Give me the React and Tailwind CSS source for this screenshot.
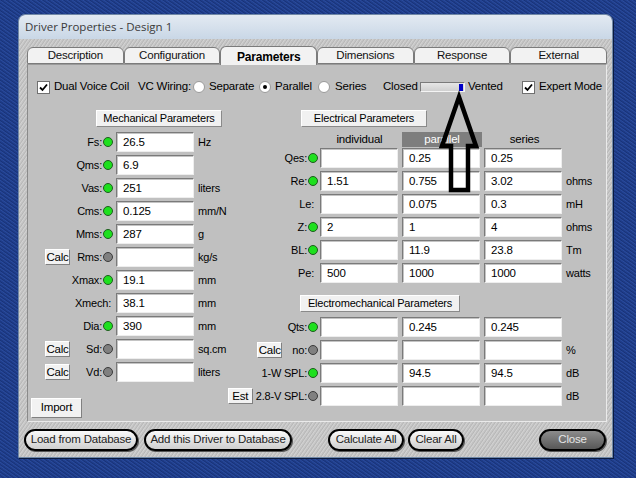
import React from "react"

const font = "font-['Liberation_Sans',Arial,sans-serif]"

const mech = [
  { l: "Fs:", led: "on", v: "26.5", u: "Hz" },
  { l: "Qms:", led: "on", v: "6.9", u: "" },
  { l: "Vas:", led: "on", v: "251", u: "liters" },
  { l: "Cms:", led: "on", v: "0.125", u: "mm/N" },
  { l: "Mms:", led: "on", v: "287", u: "g" },
  { l: "Rms:", led: "off", v: "", u: "kg/s", calc: true },
  { l: "Xmax:", led: "on", v: "19.1", u: "mm" },
  { l: "Xmech:", led: null, v: "38.1", u: "mm" },
  { l: "Dia:", led: "on", v: "390", u: "mm" },
  { l: "Sd:", led: "off", v: "", u: "sq.cm", calc: true },
  { l: "Vd:", led: "off", v: "", u: "liters", calc: true },
]

const elec = [
  { l: "Qes:", led: "on", v: ["", "0.25", "0.25"], u: "" },
  { l: "Re:", led: "on", v: ["1.51", "0.755", "3.02"], u: "ohms" },
  { l: "Le:", led: null, v: ["", "0.075", "0.3"], u: "mH" },
  { l: "Z:", led: "on", v: ["2", "1", "4"], u: "ohms" },
  { l: "BL:", led: "on", v: ["", "11.9", "23.8"], u: "Tm" },
  { l: "Pe:", led: null, v: ["500", "1000", "1000"], u: "watts" },
]

const emech = [
  { l: "Qts:", led: "on", v: ["", "0.245", "0.245"], u: "" },
  { l: "no:", led: "off", v: ["", "", ""], u: "%", btn: "Calc" },
  { l: "1-W SPL:", led: "on", v: ["", "94.5", "94.5"], u: "dB" },
  { l: "2.8-V SPL:", led: "off", v: ["", "", ""], u: "dB", btn: "Est" },
]

const tabs = ["Description", "Configuration", "Parameters", "Dimensions", "Response", "External"]

const Led = ({ state }) => (
  <span
    className={`inline-block w-[10px] h-[10px] rounded-full border ${
      state === "on" ? "bg-[#1ee01e] border-[#1f5a1f]" : "bg-[#808080] border-[#3a3a3a]"
    }`}
  />
)

const Field = ({ v }) => (
  <div className="w-[78px] h-[20px] shrink-0 bg-white border border-[#7a7a7a] border-b-[#eeeeee] border-r-[#eeeeee] shadow-[inset_1px_1px_0_#c4c4c4] pl-[6px] text-[11.5px] leading-[18px] text-black">
    {v}
  </div>
)

const SmallBtn = ({ children, className = "" }) => (
  <div
    className={`h-[16px] shrink-0 bg-[#f2f2f2] border border-white border-b-[#808080] border-r-[#808080] text-[11.5px] leading-[14px] text-center text-black whitespace-nowrap ${className}`}
  >
    {children}
  </div>
)

const Header = ({ children, className = "" }) => (
  <div
    className={`h-[17px] bg-[#f1f1f1] border border-white border-b-[#8a8a8a] border-r-[#8a8a8a] text-[11px] leading-[15px] text-center text-black whitespace-nowrap ${className}`}
  >
    {children}
  </div>
)

const Check = () => (
  <span className="w-[13px] h-[13px] shrink-0 bg-white border border-[#707070] flex items-center justify-center">
    <svg width="9" height="9" viewBox="0 0 9 9">
      <path d="M1 4.5 L3.5 7 L8 1.5" fill="none" stroke="black" strokeWidth="1.8" />
    </svg>
  </span>
)

const Radio = ({ on }) => (
  <span className="w-[12px] h-[12px] shrink-0 rounded-full bg-white border border-[#9a9a9a] flex items-center justify-center">
    {on && <span className="w-[4px] h-[4px] rounded-full bg-black" />}
  </span>
)

const PillBtn = ({ children, className = "", dark }) => (
  <div
    className={`h-[22px] shrink-0 rounded-full border-2 border-black flex items-center justify-center text-[11.5px] whitespace-nowrap shadow-[1px_1px_0_#555] ${
      dark
        ? "bg-gradient-to-b from-[#8c8c8c] to-[#585858] text-[#e6e6e6]"
        : "bg-gradient-to-b from-[#fafafa] to-[#cfcfcf] text-[#222]"
    } ${className}`}
  >
    {children}
  </div>
)

const MechRow = ({ r }) => (
  <div className="flex items-center h-[20px] pl-[17px]">
    <div className="w-[25px] shrink-0">{r.calc && <SmallBtn className="w-[25px]">Calc</SmallBtn>}</div>
    <div className="w-[46px] shrink-0 flex justify-end items-center whitespace-nowrap">
      <span className={r.led ? "" : "mr-[5px]"}>{r.l}</span>
      {r.led && (
        <span className="ml-[1px] mr-[3px] flex">
          <Led state={r.led} />
        </span>
      )}
    </div>
    <Field v={r.v} />
    <span className="pl-[4px] whitespace-nowrap">{r.u}</span>
  </div>
)

const ElecRow = ({ r }) => (
  <div className="flex items-center h-[20px]">
    <div className="w-[93px] shrink-0 flex justify-end items-center whitespace-nowrap">
      {r.btn === "Calc" && <SmallBtn className="mr-[10px] w-[25px]">Calc</SmallBtn>}
      {r.btn === "Est" && <SmallBtn className="mr-[3px] w-[25px]">Est</SmallBtn>}
      <span className={r.led ? "" : "mr-[6px]"}>{r.l}</span>
      {r.led && (
        <span className="ml-[1px] mr-[2px] flex">
          <Led state={r.led} />
        </span>
      )}
    </div>
    <div className="flex gap-[4px]">
      {r.v.map((v, i) => (
        <Field key={i} v={v} />
      ))}
    </div>
    <span className="pl-[4px] whitespace-nowrap">{r.u}</span>
  </div>
)

export default function App() {
  return (
    <div className={`relative w-[636px] h-[478px] overflow-hidden bg-[#1f3d8c] bg-[repeating-linear-gradient(35deg,#1d3a87_0px,#2a4c9e_1px,#183277_2px,#21408f_3px)] ${font} text-[11px] tracking-[-0.2px] text-black`}>
      <div className="ml-[18px] mt-[14px] w-[595px] h-[444px] flex flex-col rounded-t-[7px] overflow-hidden border border-[#7088a6] shadow-[1px_1px_0_#0a1a40]">
        {/* title bar */}
        <div className="h-[24px] shrink-0 bg-gradient-to-b from-[#e3eaf2] to-[#c9d7e6] flex items-center pl-[6px] font-['Open_Sans',sans-serif] text-[11.5px] tracking-normal text-[#3a3a3a]">
          Driver Properties - Design 1
        </div>

        {/* textured frame */}
        <div className="flex-1 bg-[#c5c5c5] bg-[repeating-linear-gradient(125deg,#c9c9c9_0px,#b6b6b6_1px,#d4d4d4_2px,#c2c2c2_3px)] pt-[8px] pl-[8px] pr-[5px] flex flex-col">
          <div className="flex w-[580px] h-[17px] items-end">
            {tabs.map((t) => {
              const active = t === "Parameters"
              return (
                <div
                  key={t}
                  className={`flex-1 rounded-t-[6px] border border-[#7b7b7b] bg-[#f2f2f2] flex items-center justify-center ${
                    active
                      ? "h-[19px] border-b-0 font-bold text-[12px] pt-[2px] -mb-[1px] z-10"
                      : "h-[17px] text-[11.5px] text-[#111]"
                  }`}
                >
                  {t}
                </div>
              )
            })}
          </div>

          {/* panel */}
          <div className="w-[580px] h-[358px] bg-[#c0c0c0] border border-[#8a8a8a] border-t-[#9a9a9a] border-r-[#eaeaea] border-b-[#eaeaea] pt-[13px]">
            {/* top row */}
            <div className="flex items-center h-[18px] pl-[9px] text-[11.5px] whitespace-nowrap">
              <Check />
              <span className="ml-[4px] w-[84px]">Dual Voice Coil</span>
              <span className="w-[55px]">VC Wiring:</span>
              <Radio />
              <span className="ml-[4px] w-[50px]">Separate</span>
              <Radio on />
              <span className="ml-[4px] w-[43px]">Parallel</span>
              <Radio />
              <span className="ml-[5px] w-[48px]">Series</span>
              <span className="w-[37px]">Closed</span>
              <span className="w-[45px] h-[10px] shrink-0 border border-[#7a7a7a] border-b-[#f4f4f4] border-r-[#f4f4f4] bg-gradient-to-b from-[#e6e6e6] to-[#d0d0d0] flex justify-end items-center pr-[1px]">
                <span className="w-[4px] h-[7px] bg-[#0000c8]" />
              </span>
              <span className="ml-[3px] w-[54px]">Vented</span>
              <Check />
              <span className="ml-[4px]">Expert Mode</span>
            </div>

            <div className="flex mt-[14px]">
              {/* mechanical */}
              <div className="w-[199px] shrink-0 flex flex-col">
                <Header className="ml-[68px] w-[126px]">Mechanical Parameters</Header>
                <div className="mt-[5px] flex flex-col gap-[3px]">
                  {mech.map((r) => (
                    <MechRow key={r.l} r={r} />
                  ))}
                </div>
                <div className="mt-[16px] ml-[3px] w-[51px] h-[20px] bg-[#f2f2f2] border border-white border-b-[#808080] border-r-[#808080] flex items-center justify-center text-[11.5px]">
                  Import
                </div>
              </div>

              {/* electrical */}
              <div className="flex-1 flex flex-col">
                <Header className="ml-[74px] w-[126px]">Electrical Parameters</Header>
                <div className="mt-[5px] flex h-[15px] pl-[93px] gap-[3px] text-[11.5px] leading-[15px]">
                  <span className="w-[79px] text-center">individual</span>
                  <span className="w-[80px] text-center bg-[#7e7e7e] text-white">parallel</span>
                  <span className="w-[79px] text-center">series</span>
                </div>
                <div className="mt-[1px] flex flex-col gap-[3px]">
                  {elec.map((r) => (
                    <ElecRow key={r.l} r={r} />
                  ))}
                </div>
                <Header className="mt-[12px] ml-[73px] w-[160px]">Electromechanical Parameters</Header>
                <div className="mt-[5px] flex flex-col gap-[3px]">
                  {emech.map((r) => (
                    <ElecRow key={r.l} r={r} />
                  ))}
                </div>
              </div>
            </div>
          </div>

          {/* bottom buttons */}
          <div className="flex mt-[7px] -ml-[3px]">
            <PillBtn className="w-[114px]">Load from Database</PillBtn>
            <PillBtn className="ml-[6px] w-[148px]">Add this Driver to Database</PillBtn>
            <PillBtn className="ml-[36px] w-[76px]">Calculate All</PillBtn>
            <PillBtn className="ml-[4px] w-[56px]">Clear All</PillBtn>
            <PillBtn dark className="ml-[75px] w-[67px]">Close</PillBtn>
          </div>
        </div>
      </div>

      {/* annotation arrow */}
      <svg className="absolute left-0 top-0 pointer-events-none" width="636" height="478" viewBox="0 0 636 478">
        <path
          d="M459 97 L476 146 L468 146 L468 190 L451 190 L451 146 L442 146 Z"
          fill="none"
          stroke="black"
          strokeWidth="4.5"
          strokeLinejoin="miter"
        />
      </svg>
    </div>
  )
}
